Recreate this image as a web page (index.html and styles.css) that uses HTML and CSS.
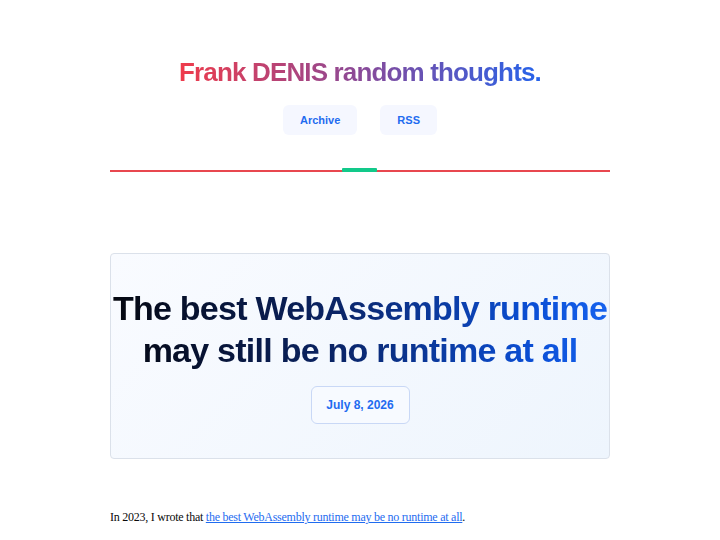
FILE: index.html
```html
<!DOCTYPE html>
<html lang="en">
<head>
<meta charset="utf-8">
<title>Frank DENIS random thoughts.</title>
<link rel="stylesheet" href="styles.css">
</head>
<body>
<div class="page">
  <header class="site-header">
    <h1 class="site-title"><a href="#">Frank DENIS random thoughts.</a></h1>
    <nav class="site-nav">
      <a class="nav-link" href="#">Archive</a>
      <a class="nav-link" href="#">RSS</a>
    </nav>
    <div class="rule"><span class="rule-mark"></span></div>
  </header>

  <article class="post">
    <div class="post-hero">
      <h2 class="post-title">The best WebAssembly runtime may still be no runtime at all</h2>
      <time class="post-date" datetime="2026-07-08">July 8, 2026</time>
    </div>
    <p class="post-text">In 2023, I wrote that <a href="#">the best WebAssembly runtime may be no runtime at all</a>.</p>
  </article>
</div>
</body>
</html>
```

FILE: styles.css
```css
html, body {
  margin: 0;
  padding: 0;
  background: #ffffff;
}

.page {
  width: 500px;
  margin: 0 auto;
  font-family: "Liberation Sans", Arial, sans-serif;
}

.site-header {
  padding-top: 56px;
  display: flex;
  flex-direction: column;
  align-items: center;
}

.site-title {
  margin: 0;
  font-size: 26px;
  line-height: 32px;
  font-weight: 700;
  letter-spacing: -0.85px;
}

.site-title a {
  text-decoration: none;
  background: linear-gradient(90deg, #ef3b4b 0%, #8a4a98 50%, #2563eb 100%);
  -webkit-background-clip: text;
  background-clip: text;
  color: transparent;
}

.site-nav {
  display: flex;
  gap: 23px;
  margin-top: 17px;
}

.nav-link {
  display: block;
  height: 30px;
  line-height: 30px;
  padding: 0 17px;
  border-radius: 6px;
  background: #f5f7ff;
  color: #1f6cf0;
  font-size: 11px;
  font-weight: 700;
  text-decoration: none;
}

.rule {
  align-self: stretch;
  position: relative;
  height: 2px;
  margin-top: 35px;
  background: #e8474f;
}

.rule-mark {
  position: absolute;
  left: 232px;
  top: -2px;
  width: 35px;
  height: 4px;
  border-radius: 1px;
  background: #12c98a;
}

.post {
  margin-top: 81px;
}

.post-hero {
  border: 1px solid #dbe1ea;
  border-radius: 4px;
  background: linear-gradient(135deg, #f9fbff 0%, #eef5fd 100%);
  padding: 33px 0 34px;
  display: flex;
  flex-direction: column;
  align-items: center;
}

.post-title {
  margin: 0;
  font-size: 34px;
  line-height: 42px;
  font-weight: 700;
  letter-spacing: -0.75px;
  text-align: center;
  background: linear-gradient(90deg, #05070f 0%, #0a2466 45%, #0b4fd6 85%, #1562ee 100%);
  -webkit-background-clip: text;
  background-clip: text;
  color: transparent;
}

.post-date {
  margin-top: 15px;
  width: 97px;
  height: 36px;
  line-height: 36px;
  text-align: center;
  border: 1px solid #c9d8f6;
  border-radius: 6px;
  background: #f7faff;
  color: #1f6cf0;
  font-size: 12px;
  font-weight: 700;
}

.post-text {
  margin: 50px 0 0;
  font-family: "Liberation Serif", "Times New Roman", serif;
  font-size: 12px;
  line-height: 16px;
  letter-spacing: -0.25px;
  color: #0a0a0a;
}

.post-text a {
  color: #1f6cf0;
  text-decoration: underline;
}
```
